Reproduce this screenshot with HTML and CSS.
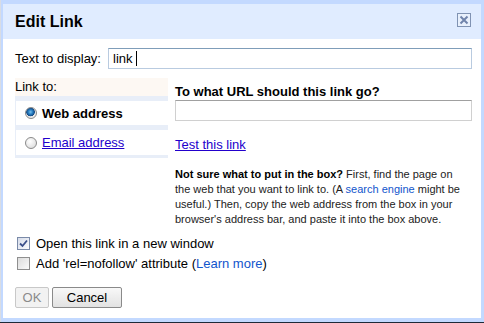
FILE: index.html
```html
<!DOCTYPE html>
<html>
<head>
<meta charset="utf-8">
<link rel="stylesheet" href="styles.css">
</head>
<body>
<div class="page">
  <div class="dialog">
    <div class="titlebar">
      <span class="title">Edit Link</span>
      <span class="close">
        <svg width="14" height="14" viewBox="0 0 14 14">
          <rect x="0.5" y="0.5" width="13" height="13" fill="#e8f0fc" stroke="#8093b3"/>
          <path d="M3.5 3.5 L10.5 10.5 M10.5 3.5 L3.5 10.5" stroke="#7084ab" stroke-width="2"/>
        </svg>
      </span>
    </div>
    <div class="content">
      <div class="display-row">
        <span class="label">Text to display:</span>
        <div class="textbox">link<span class="caret"></span></div>
      </div>
      <div class="main">
        <div class="left">
          <div class="linkto">Link to:</div>
          <div class="panel">
            <div class="opt"><span class="radio on"></span><b>Web address</b></div>
            <div class="opt"><span class="radio"></span><a class="ulink">Email address</a></div>
          </div>
        </div>
        <div class="right">
          <div class="question">To what URL should this link go?</div>
          <div class="textbox url"></div>
          <a class="ulink test">Test this link</a>
          <p class="help"><b>Not sure what to put in the box?</b> First, find the page on<br>the web that you want to link to. (A <span class="blue">search engine</span> might be<br>useful.) Then, copy the web address from the box in your<br>browser's address bar, and paste it into the box above.</p>
        </div>
      </div>
      <div class="checks">
        <div class="check-row"><span class="checkbox on">
          <svg width="9" height="9" viewBox="0 0 9 9"><path d="M1 4.5 L3.5 7 L8 1.5" fill="none" stroke="#3b4f8a" stroke-width="1.8"/></svg>
        </span>Open this link in a new window</div>
        <div class="check-row"><span class="checkbox"></span>Add 'rel=nofollow' attribute (<span class="blue">Learn more</span>)</div>
      </div>
      <div class="buttons">
        <span class="btn disabled">OK</span>
        <span class="btn">Cancel</span>
      </div>
    </div>
  </div>
</div>
</body>
</html>
```
FILE: styles.css
```css
html, body {
  margin: 0;
  padding: 0;
}
body {
  width: 484px;
  height: 323px;
  overflow: hidden;
  background: #d8dce4;
  font-family: "Liberation Sans", Arial, sans-serif;
  font-size: 13px;
  color: #000;
}
.page {
  padding-left: 1px;
  border-bottom: 1px solid #1e2a38;
}
.dialog {
  border: solid #c3d9ff;
  border-width: 4px 3px 4px 2px;
  background: #fff;
  height: 314px;
  display: flex;
  flex-direction: column;
}
.titlebar {
  height: 35px;
  background: #e0ecff;
  display: flex;
  align-items: center;
  justify-content: space-between;
  padding: 0 10px 0 12px;
}
.title {
  font-weight: bold;
  font-size: 16px;
  padding-top: 1px;
}
.close {
  display: flex;
  margin-top: -3px;
}
.content {
  padding: 9px 9px 0 12px;
  display: flex;
  flex-direction: column;
}
.display-row {
  display: flex;
  align-items: center;
  gap: 7px;
  height: 21px;
}
.textbox {
  box-sizing: border-box;
  height: 21px;
  flex: 1;
  border: 1px solid #b9cbe0;
  border-top-color: #7f9db9;
  padding: 2px 4px;
  line-height: 15px;
  display: flex;
  align-items: center;
}
.caret {
  display: inline-block;
  width: 1px;
  height: 15px;
  background: #000;
  margin-left: 3px;
}
.main {
  display: flex;
  gap: 7px;
  margin-top: 9px;
}
.left {
  width: 153px;
  flex: none;
}
.linkto {
  height: 18px;
  line-height: 18px;
  background: #fdf8f3;
}
.panel {
  background: #e8eef8;
  padding: 5px 0 3px 1px;
  display: flex;
  flex-direction: column;
  gap: 5px;
}
.opt {
  background: #fff;
  height: 24px;
  display: flex;
  align-items: center;
  padding-left: 9px;
}
.opt + .opt {
  height: 25px;
}
.radio {
  width: 12px;
  height: 12px;
  border-radius: 50%;
  box-sizing: border-box;
  border: 1px solid #8a8a8a;
  background: radial-gradient(circle at 40% 35%, #ffffff, #d6d6d6);
  margin-right: 5px;
  flex: none;
}
.radio.on {
  background: radial-gradient(circle at 45% 40%, #7ec0ea 0, #2d85c8 2px, #114a86 4px, #e6e6e6 4.6px, #f5f5f5 100%);
}
.ulink {
  color: #2200cc;
  text-decoration: underline;
}
.right {
  width: 297px;
  padding-top: 6px;
  display: flex;
  flex-direction: column;
}
.question {
  font-weight: bold;
  line-height: 15px;
}
.textbox.url {
  flex: none;
  margin-top: 1px;
  border-color: #d0d0d0;
  border-top-color: #a0a0a0;
}
.test {
  margin-top: 16px;
  line-height: 15px;
  align-self: flex-start;
}
.help {
  margin: 15px 0 0;
  font-size: 11px;
  line-height: 15px;
  color: #222;
  white-space: nowrap;
}
.help b {
  color: #000;
}
.blue {
  color: #1155cc;
}
.checks {
  margin-top: 6px;
  display: flex;
  flex-direction: column;
}
.check-row {
  height: 20px;
  display: flex;
  align-items: center;
  padding-left: 2px;
}
.checkbox {
  width: 13px;
  height: 13px;
  box-sizing: border-box;
  border: 1px solid #8f8f8f;
  background: linear-gradient(135deg, #dcdcdc, #fbfbfb);
  margin-right: 6px;
  display: flex;
  align-items: center;
  justify-content: center;
  flex: none;
}
.checkbox.on {
  border-color: #7a8aa8;
  background: linear-gradient(135deg, #d6dcea, #fbfbfd);
}
.buttons {
  margin-top: 14px;
  display: flex;
  gap: 3px;
}
.btn {
  box-sizing: border-box;
  height: 21px;
  display: flex;
  align-items: center;
  justify-content: center;
  border: 1px solid #8a8a8a;
  border-radius: 2px;
  background: linear-gradient(#f8f8f8, #e2e2e2);
  width: 70px;
}
.btn.disabled {
  width: 34px;
  color: #8a8a8a;
  border-color: #c8c8c8;
  background: #f2f2f2;
}
```
